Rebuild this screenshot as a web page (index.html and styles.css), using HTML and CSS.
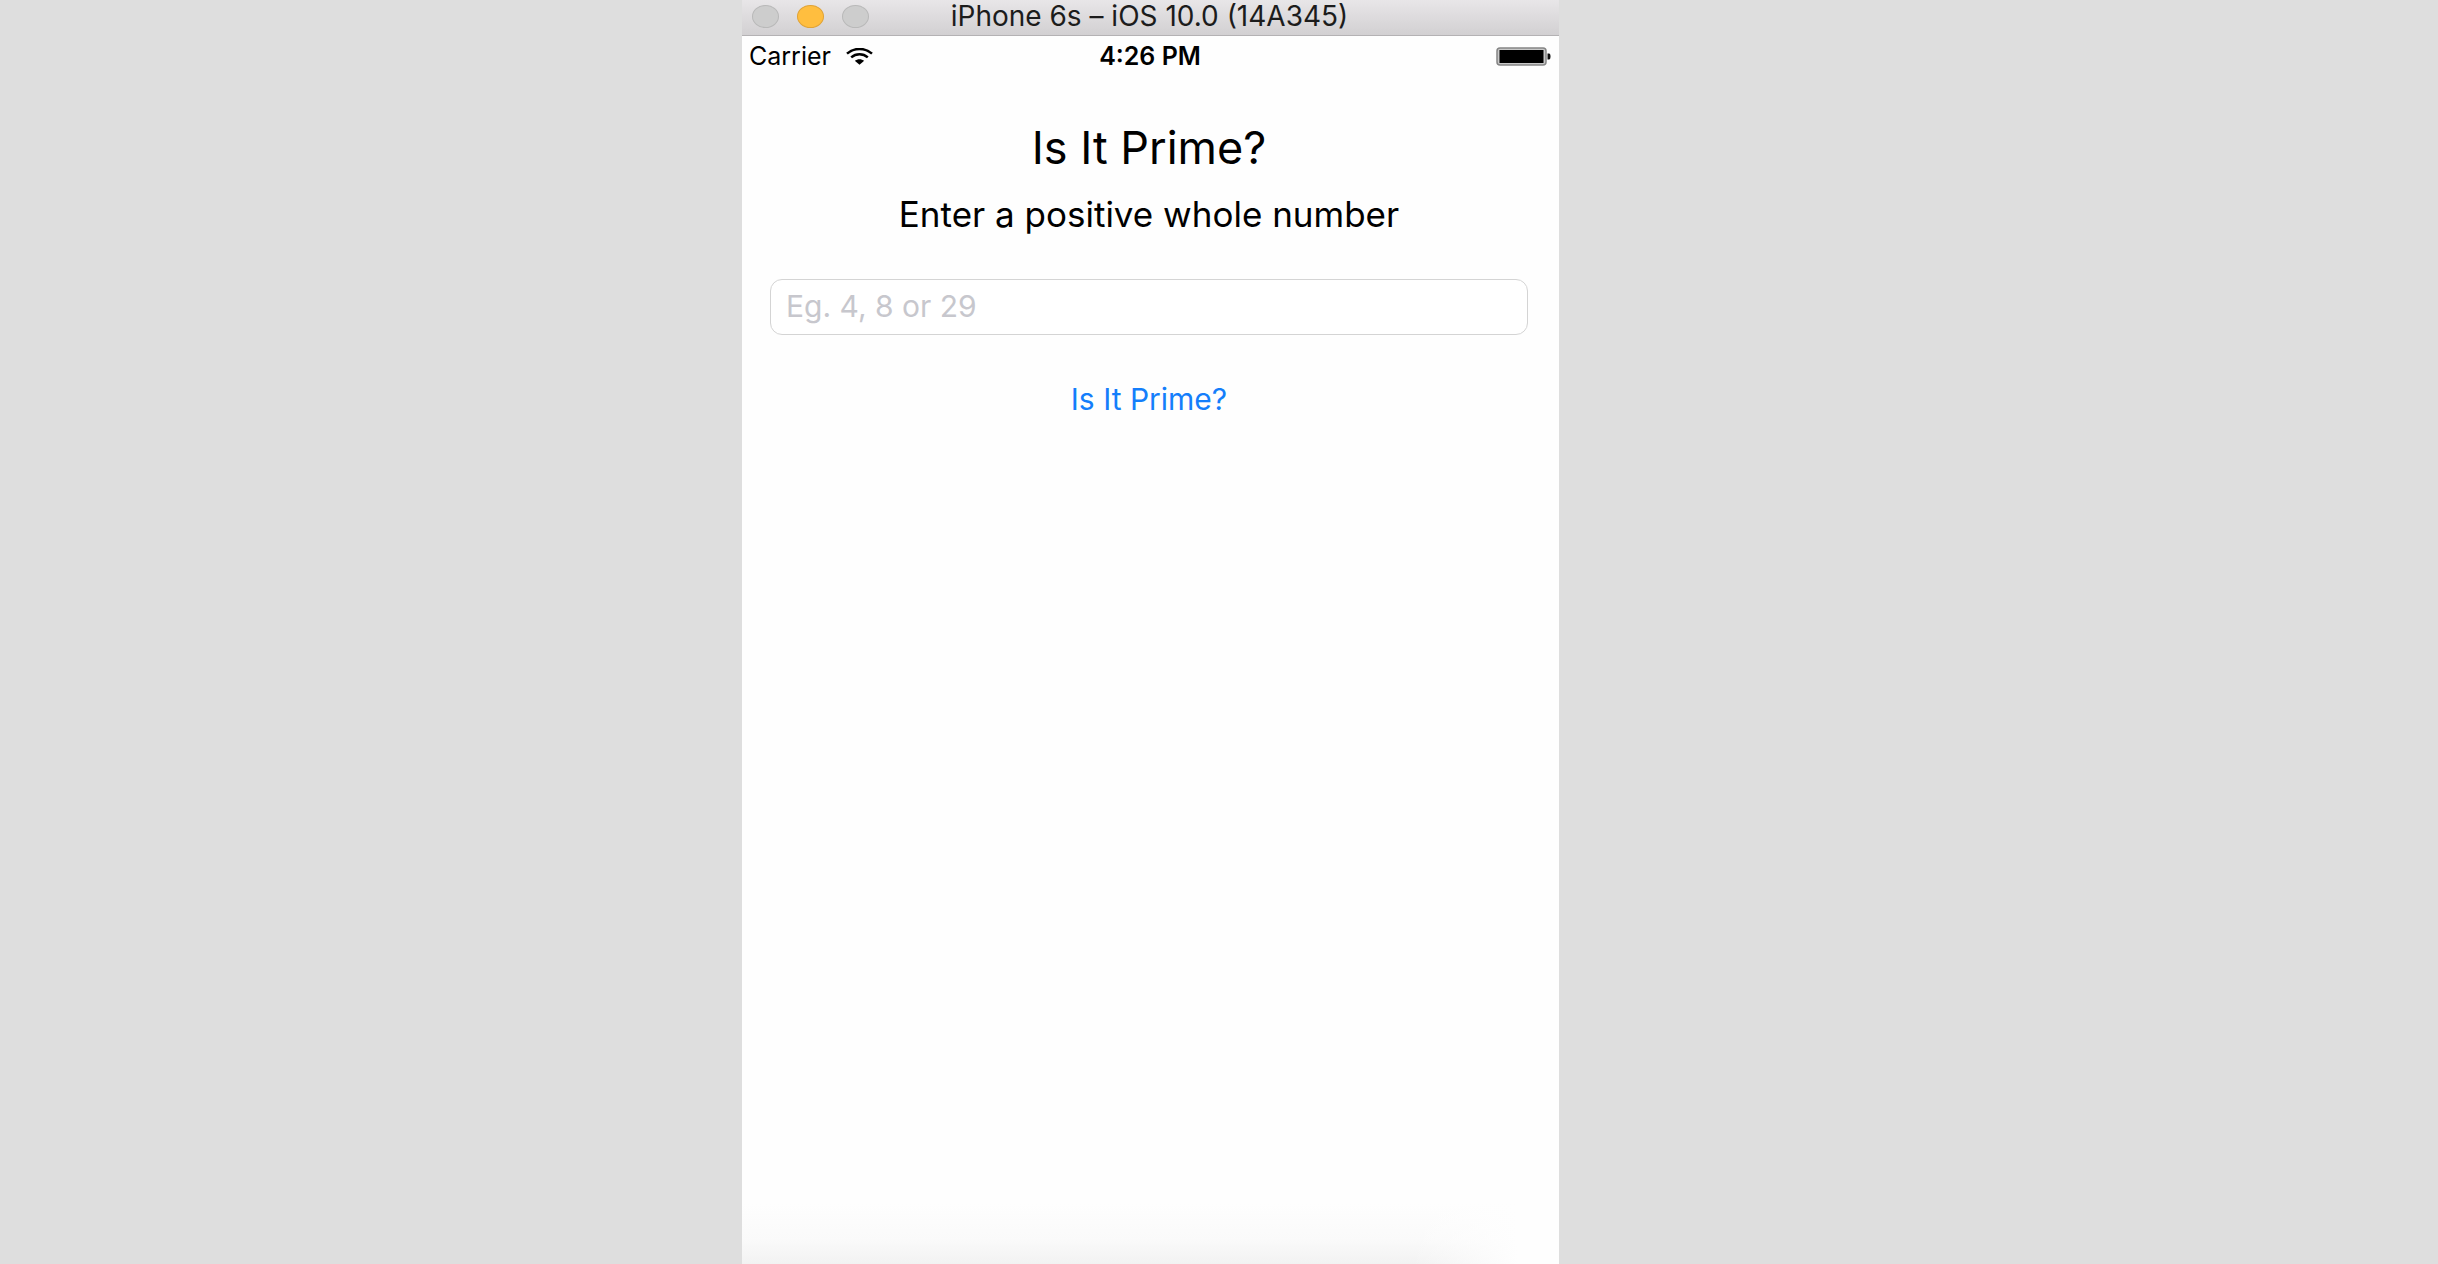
FILE: index.html
```html
<!DOCTYPE html>
<html lang="en">
<head>
<meta charset="utf-8">
<title>Is It Prime?</title>
<link rel="stylesheet" href="styles.css">
</head>
<body>
<main class="simulator">
  <header class="titlebar">
    <div class="lights">
      <button class="light" type="button" aria-label="Close"></button>
      <button class="light light-minimize" type="button" aria-label="Minimize"></button>
      <button class="light" type="button" aria-label="Zoom"></button>
    </div>
    <span class="window-title">iPhone 6s – iOS 10.0 (14A345)</span>
  </header>
  <div class="statusbar">
    <div class="carrier">
      <span>Carrier</span>
      <svg class="wifi" viewBox="0 0 27 17" width="27" height="17" aria-hidden="true">
        <path d="M1 5.600C8 -.6 19 -.6 26 5.600" fill="none" stroke="#000" stroke-width="2.500"/>
        <path d="M5.200 9.400C10 5.300 17 5.300 21.800 9.400" fill="none" stroke="#000" stroke-width="2.500"/>
        <path d="M8.800 12.700C11.500 10.600 15.500 10.600 18.200 12.700L13.500 16.800Z" fill="#000"/>
      </svg>
    </div>
    <span class="clock">4:26 PM</span>
    <svg class="battery" viewBox="0 0 55 19" width="55" height="19" aria-hidden="true">
      <rect x="1" y="1" width="49" height="17" rx="3" fill="#c8c8c8" stroke="#858585" stroke-width="1.500"/>
      <rect x="3.500" y="3" width="44" height="13" fill="#000"/>
      <path d="M51.500 6.500H53Q54.500 6.500 54.500 9.500T53 12.500H51.500Z" fill="#111"/>
    </svg>
  </div>
  <form class="prime-form">
    <h1 class="heading">Is It Prime?</h1>
    <label class="prompt" for="number">Enter a positive whole number</label>
    <input class="number" id="number" type="text" inputmode="numeric" placeholder="Eg. 4, 8 or 29">
    <button class="check" type="button">Is It Prime?</button>
  </form>
  <div class="shade"></div>
</main>
</body>
</html>
```
FILE: styles.css
```css
* {
  box-sizing: border-box;
}

body {
  margin: 0;
  min-height: 100vh;
  display: grid;
  grid-template-columns: 742fr 817fr 879fr;
  background: #dedede;
  color: #000;
  font-family: Inter, "Liberation Sans", sans-serif;
}

button,
input {
  font: inherit;
}

.simulator {
  grid-column: 2;
  display: flex;
  flex-direction: column;
  min-height: 100vh;
  background: #fefefe;
}

.titlebar,
.statusbar {
  display: grid;
  grid-template-columns: 1fr auto 1fr;
  align-items: center;
}

.titlebar {
  height: 36px;
  padding: 0 12px 3px 10px;
  border-bottom: 1px solid #b4b2b4;
  background: linear-gradient(#e8e6e8, #d2d0d2);
}

.lights {
  display: flex;
  gap: 18px;
}

.light {
  width: 27px;
  height: 23px;
  padding: 0;
  border: 1px solid #b9b9b9;
  border-radius: 50%;
  background: #cdcdcd;
}

.light-minimize {
  border-color: #e0a336;
  background: #ffbe3f;
}

.window-title {
  font-size: 28px;
  line-height: 32px;
  color: #1c1c1c;
}

.statusbar {
  padding: 4px 8px 0 7px;
  font-size: 25px;
  line-height: 32px;
}

.carrier {
  display: flex;
  align-items: center;
  gap: 15px;
}

.clock {
  font-weight: 600;
}

.battery {
  justify-self: end;
}

.prime-form {
  display: flex;
  flex-direction: column;
  align-items: center;
  padding: 48px 31px 0 28px;
}

.heading {
  margin: 0;
  font-size: 45px;
  font-weight: 400;
  line-height: 56px;
}

.prompt {
  margin-top: 18px;
  font-size: 35px;
  line-height: 40px;
}

.number {
  width: 100%;
  height: 56px;
  margin-top: 45px;
  padding: 0 15px 2px;
  border: 1px solid #d4d4d4;
  border-radius: 12px;
  background: #fff;
  font-size: 30px;
}

.number::placeholder {
  color: #c7c7cd;
  opacity: 1;
}

.check {
  margin-top: 44px;
  padding: 0;
  border: 0;
  background: none;
  color: #147efb;
  font-size: 30px;
  line-height: 40px;
}

.shade {
  height: 60px;
  margin-top: auto;
  background:
    linear-gradient(to right, transparent 82%, #fefefe 95%),
    linear-gradient(#fefefe, #fafafa 60%, #f2f2f2);
}
```
